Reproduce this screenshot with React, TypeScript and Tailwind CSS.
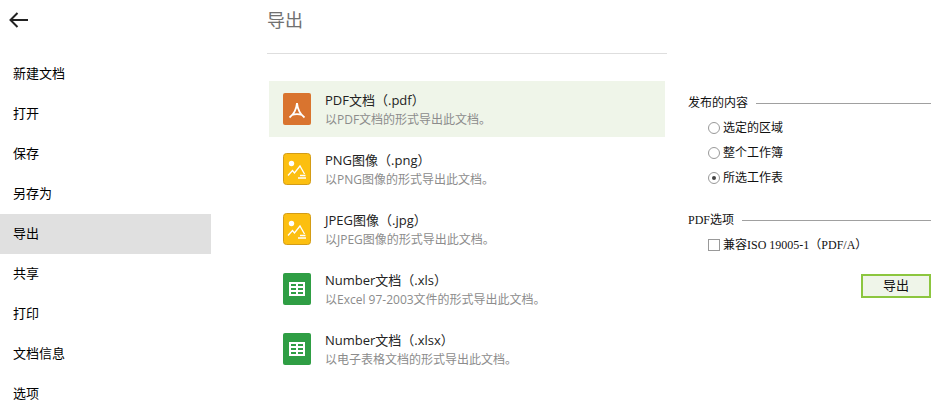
import { useState } from "react";

const menuItems = [
  "新建文档",
  "打开",
  "保存",
  "另存为",
  "导出",
  "共享",
  "打印",
  "文档信息",
  "选项",
];

const formats = [
  { id: "pdf", icon: "pdf", title: "PDF文档（.pdf）", desc: "以PDF文档的形式导出此文档。" },
  { id: "png", icon: "image", title: "PNG图像（.png）", desc: "以PNG图像的形式导出此文档。" },
  { id: "jpg", icon: "image", title: "JPEG图像（.jpg）", desc: "以JPEG图像的形式导出此文档。" },
  { id: "xls", icon: "sheet", title: "Number文档（.xls）", desc: "以Excel 97-2003文件的形式导出此文档。" },
  { id: "xlsx", icon: "sheet", title: "Number文档（.xlsx）", desc: "以电子表格文档的形式导出此文档。" },
];

const scopes = [
  { value: "range", label: "选定的区域" },
  { value: "workbook", label: "整个工作簿" },
  { value: "sheet", label: "所选工作表" },
];

const BackIcon = () => (
  <svg width="20" height="18" viewBox="0 0 20 18" fill="none" stroke="#222" strokeWidth="2">
    <path d="M2.5 9H20M9.5 2L2.5 9L9.5 16" />
  </svg>
);

const FormatIcon = ({ type }: { type: string }) => {
  if (type === "pdf") {
    return (
      <svg width="28" height="32" viewBox="0 0 28 32" fill="none">
        <rect width="28" height="32" rx="2" fill="#d9742f" />
        <path
          d="M14 10C13.5 15.5 11 21 6.5 24.5M14 10C14.5 15.5 17 21 21.5 24.5M9 22C12.5 20.8 15.5 20.8 19 22"
          stroke="#fff"
          strokeWidth="1.8"
        />
      </svg>
    );
  }
  if (type === "image") {
    return (
      <svg width="28" height="32" viewBox="0 0 28 32" fill="none">
        <rect x="0.5" y="0.5" width="27" height="31" rx="3" fill="#fcbf10" stroke="#d39c16" />
        <circle cx="8.5" cy="10.5" r="2.7" fill="#fff" />
        <path d="M5 22.5L9.5 17.5L11.5 20L17 13L21.5 21" stroke="#fff" strokeWidth="1.3" />
        <path d="M17 22.5H22.5M15 25H23" stroke="#fff" strokeWidth="1.3" />
      </svg>
    );
  }
  return (
    <svg width="28" height="32" viewBox="0 0 28 32">
      <rect width="28" height="32" rx="2" fill="#2f9e44" />
      <rect x="6" y="9" width="16" height="14" fill="#fff" />
      <path
        d="M8 11h5v2H8zM15 11h5v2h-5zM8 15h5v2H8zM15 15h5v2h-5zM8 19h5v2H8zM15 19h5v2h-5z"
        fill="#2f9e44"
      />
    </svg>
  );
};

const SectionTitle = ({ children }: { children: string }) => (
  <div className="flex items-center gap-2">
    <h2>{children}</h2>
    <div className="flex-1 border-t border-[#a0a0a0]" />
  </div>
);

export default function App() {
  const [activeMenu, setActiveMenu] = useState("导出");
  const [format, setFormat] = useState("pdf");
  const [scope, setScope] = useState("sheet");
  const [pdfA, setPdfA] = useState(false);

  return (
    <div className="flex min-h-screen bg-white font-['Open_Sans','Noto_Sans_CJK_SC',sans-serif] text-black">
      <aside className="w-[211px] shrink-0">
        <div className="flex h-[54px] items-start px-2 pt-[11px]">
          <button type="button" aria-label="返回">
            <BackIcon />
          </button>
        </div>
        <nav>
          {menuItems.map((item) => (
            <button
              key={item}
              type="button"
              onClick={() => setActiveMenu(item)}
              className={`block h-10 w-full px-[13px] pb-0.5 text-left text-[13px] leading-5 ${
                activeMenu === item ? "bg-[#e0e0e0]" : "hover:bg-gray-100"
              }`}
            >
              {item}
            </button>
          ))}
        </nav>
      </aside>

      <main className="ml-14 min-w-0 flex-1">
        <h1 className="h-[54px] border-b border-[#dedede] pt-2 text-lg leading-6 text-[#707070]">
          导出
        </h1>
        <div className="mt-[27px] flex flex-col gap-1 px-0.5">
          {formats.map((f) => (
            <button
              key={f.id}
              type="button"
              onClick={() => setFormat(f.id)}
              className={`flex h-14 items-center gap-3.5 px-3.5 text-left ${
                format === f.id ? "bg-[#eff5e9]" : ""
              }`}
            >
              <FormatIcon type={f.icon} />
              <span className="flex flex-col pt-0.5">
                <span className="text-[13px] leading-5 text-[#222]">{f.title}</span>
                <span className="text-xs leading-5 text-[#8c8c8c]">{f.desc}</span>
              </span>
            </button>
          ))}
        </div>
      </main>

      <section className="mr-[9px] ml-[21px] w-[243px] shrink-0 pt-[94px] font-['Liberation_Serif','Noto_Sans_CJK_SC',serif] text-xs leading-[18px] text-[#111]">
        <SectionTitle>发布的内容</SectionTitle>
        <div className="mt-[7px] flex flex-col gap-[7px] pl-5">
          {scopes.map((s) => (
            <label key={s.value} className="flex items-center gap-[3px]">
              <input
                type="radio"
                name="scope"
                value={s.value}
                checked={scope === s.value}
                onChange={() => setScope(s.value)}
                className="grid size-3 appearance-none place-items-center rounded-full border border-[#999] bg-white before:size-1 before:rounded-full checked:before:bg-[#444]"
              />
              {s.label}
            </label>
          ))}
        </div>

        <div className="mt-6">
          <SectionTitle>PDF选项</SectionTitle>
        </div>
        <label className="mt-[7px] flex items-center gap-[3px] pl-5">
          <input
            type="checkbox"
            checked={pdfA}
            onChange={(e) => setPdfA(e.target.checked)}
            className="size-3 appearance-none border border-[#999] bg-white checked:bg-[#8cc63f]"
          />
          兼容ISO 19005-1（PDF/A）
        </label>

        <div className="mt-5 flex justify-end">
          <button
            type="button"
            className="h-6 w-[70px] border-2 border-[#8cc63f] bg-[#eff5e9] text-[13px] leading-5"
          >
            导出
          </button>
        </div>
      </section>
    </div>
  );
}
